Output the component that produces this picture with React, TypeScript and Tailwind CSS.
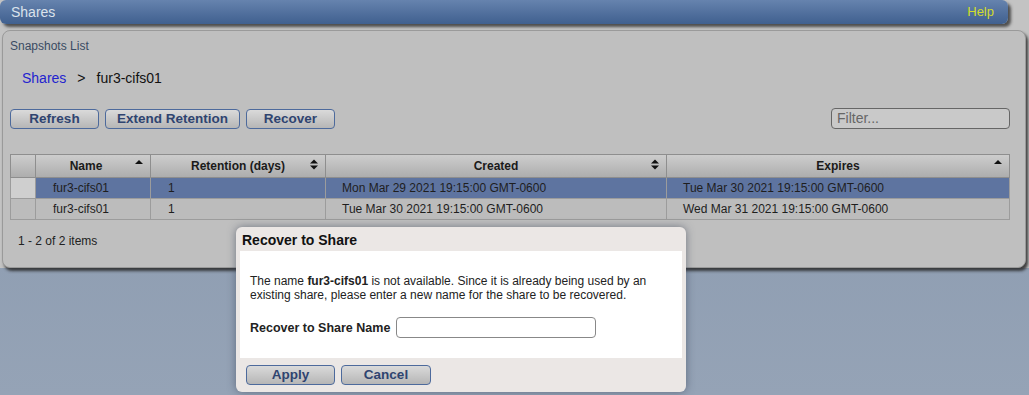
import React from "react";

const font = { fontFamily: '"Liberation Sans", Arial, sans-serif' };

function SortUp() {
  return (
    <svg width="8" height="6" viewBox="0 0 8 6" className="absolute right-[7px] top-[4px]">
      <path d="M0 5 L4 1 L8 5 Z" fill="#111" />
    </svg>
  );
}

function SortBoth() {
  return (
    <svg width="8" height="11" viewBox="0 0 8 11" className="absolute right-[7px] top-[4px]">
      <path d="M0 4.5 L4 0.5 L8 4.5 Z" fill="#111" />
      <path d="M0 6.5 L4 10.5 L8 6.5 Z" fill="#111" />
    </svg>
  );
}

function Btn({ label, w }: { label: string; w: string }) {
  return (
    <button
      className={`${w} h-[20px] rounded-[4px] border border-[#4d6a9c] bg-gradient-to-b from-[#dadada] to-[#b6b6b6] text-[13.5px] font-bold text-[#2f4470] leading-none`}
    >
      {label}
    </button>
  );
}

const rows = [
  {
    name: "fur3-cifs01",
    ret: "1",
    created: "Mon Mar 29 2021 19:15:00 GMT-0600",
    expires: "Tue Mar 30 2021 19:15:00 GMT-0600",
    selected: true,
  },
  {
    name: "fur3-cifs01",
    ret: "1",
    created: "Tue Mar 30 2021 19:15:00 GMT-0600",
    expires: "Wed Mar 31 2021 19:15:00 GMT-0600",
    selected: false,
  },
];

export default function App() {
  return (
    <div
      className="relative w-[1029px] h-[395px] overflow-hidden bg-gradient-to-b from-[#8797ad] to-[#95a3b6]"
      style={font}
    >
      {/* page area */}
      <div className="bg-[#c3c3c3]">
        {/* title bar */}
        <div className="flex h-[24px] w-[1008px] items-center justify-between rounded-[6px] bg-gradient-to-b from-[#6683ae] to-[#40608f] pl-[11px] pr-[14px] shadow-[3px_3px_3px_rgba(40,40,40,0.75)]">
          <span className="text-[14px] text-[#dbe3ec]">Shares</span>
          <span className="text-[13px] text-[#d2dc2a]">Help</span>
        </div>

        {/* panel */}
        <div className="mt-[6px] ml-[2px] w-[1024px] h-[238px] rounded-[8px] border border-[#9a9a9a] bg-[#bfbfbf] shadow-[2px_3px_3px_rgba(40,40,40,0.85)] px-[7px] pt-[8px]">
          <div className="text-[12px] text-[#3a4b63] leading-[14px]">Snapshots List</div>

          <div className="mt-[17px] flex items-center pl-[12px] text-[14px] leading-[16px]">
            <span className="text-[#2323cf]">Shares</span>
            <span className="ml-[11px] text-[#111]">&gt;</span>
            <span className="ml-[11px] text-[#111]">fur3-cifs01</span>
          </div>

          <div className="mt-[22px] flex items-center">
            <div className="flex gap-[6px]">
              <Btn label="Refresh" w="w-[89px]" />
              <Btn label="Extend Retention" w="w-[135px]" />
              <Btn label="Recover" w="w-[89px]" />
            </div>
            <div className="ml-auto mr-[8px] flex h-[21px] w-[179px] items-center rounded-[4px] border border-[#666] bg-[#c9c9c9] pl-[5px] text-[14px] text-[#666]">
              Filter...
            </div>
          </div>

          {/* table */}
          <table className="mt-[25px] w-[999px] table-fixed border-collapse text-[12px]">
            <colgroup>
              <col className="w-[25px]" />
              <col className="w-[115px]" />
              <col className="w-[175px]" />
              <col className="w-[341px]" />
              <col className="w-[343px]" />
            </colgroup>
            <thead>
              <tr className="h-[23px] bg-gradient-to-b from-[#cdcdcd] to-[#acacac]">
                <th className="border border-[#8e8e8e]" />
                <th className="relative border border-[#8e8e8e] pr-[14px] font-bold text-[#1a1a1a]">
                  Name
                  <SortUp />
                </th>
                <th className="relative border border-[#8e8e8e] font-bold text-[#1a1a1a]">
                  Retention (days)
                  <SortBoth />
                </th>
                <th className="relative border border-[#8e8e8e] font-bold text-[#1a1a1a]">
                  Created
                  <SortBoth />
                </th>
                <th className="relative border border-[#8e8e8e] font-bold text-[#1a1a1a]">
                  Expires
                  <SortUp />
                </th>
              </tr>
            </thead>
            <tbody>
              {rows.map((r, i) => (
                <tr key={i} className={`h-[21px] ${r.selected ? "bg-[#5e74a0]" : "bg-[#bcbcbc]"} text-[#1e1e1e]`}>
                  <td className={`border border-[#9c9c9c] ${r.selected ? "bg-[#cfcfcf]" : "bg-[#bcbcbc]"}`} />
                  <td className="border border-[#9c9c9c] pl-[17px]">{r.name}</td>
                  <td className="border border-[#9c9c9c] pl-[17px]">{r.ret}</td>
                  <td className="border border-[#9c9c9c] pl-[16px]">{r.created}</td>
                  <td className="border border-[#9c9c9c] pl-[16px]">{r.expires}</td>
                </tr>
              ))}
            </tbody>
          </table>

          <div className="mt-[14px] pl-[8px] text-[12px] leading-[14px] text-[#222]">1 - 2 of 2 items</div>
        </div>
      </div>

      {/* modal */}
      <div className="absolute left-[236px] top-[227px] w-[450px] h-[165px] rounded-[6px] bg-[#ebe7e5] px-[4px] shadow-[0_0_8px_rgba(50,60,80,0.55)]">
        <div className="pl-[2px] pt-[3px] text-[14px] font-bold leading-[20px] text-[#111]">Recover to Share</div>
        <div className="mt-[1px] h-[107px] bg-white px-[10px] pt-[23px] text-[12px] leading-[14px] text-[#222]">
          <p>
            The name <b>fur3-cifs01</b> is not available. Since it is already being used by an existing share,
            please enter a new name for the share to be recovered.
          </p>
          <div className="mt-[15px] flex items-center">
            <span className="text-[12.5px] font-bold">Recover to Share Name</span>
            <div className="ml-[6px] h-[21px] w-[200px] rounded-[4px] border border-[#888] bg-white" />
          </div>
        </div>
        <div className="mt-[7px] flex gap-[6px] pl-[6px]">
          <Btn label="Apply" w="w-[89px]" />
          <Btn label="Cancel" w="w-[90px]" />
        </div>
      </div>
    </div>
  );
}
